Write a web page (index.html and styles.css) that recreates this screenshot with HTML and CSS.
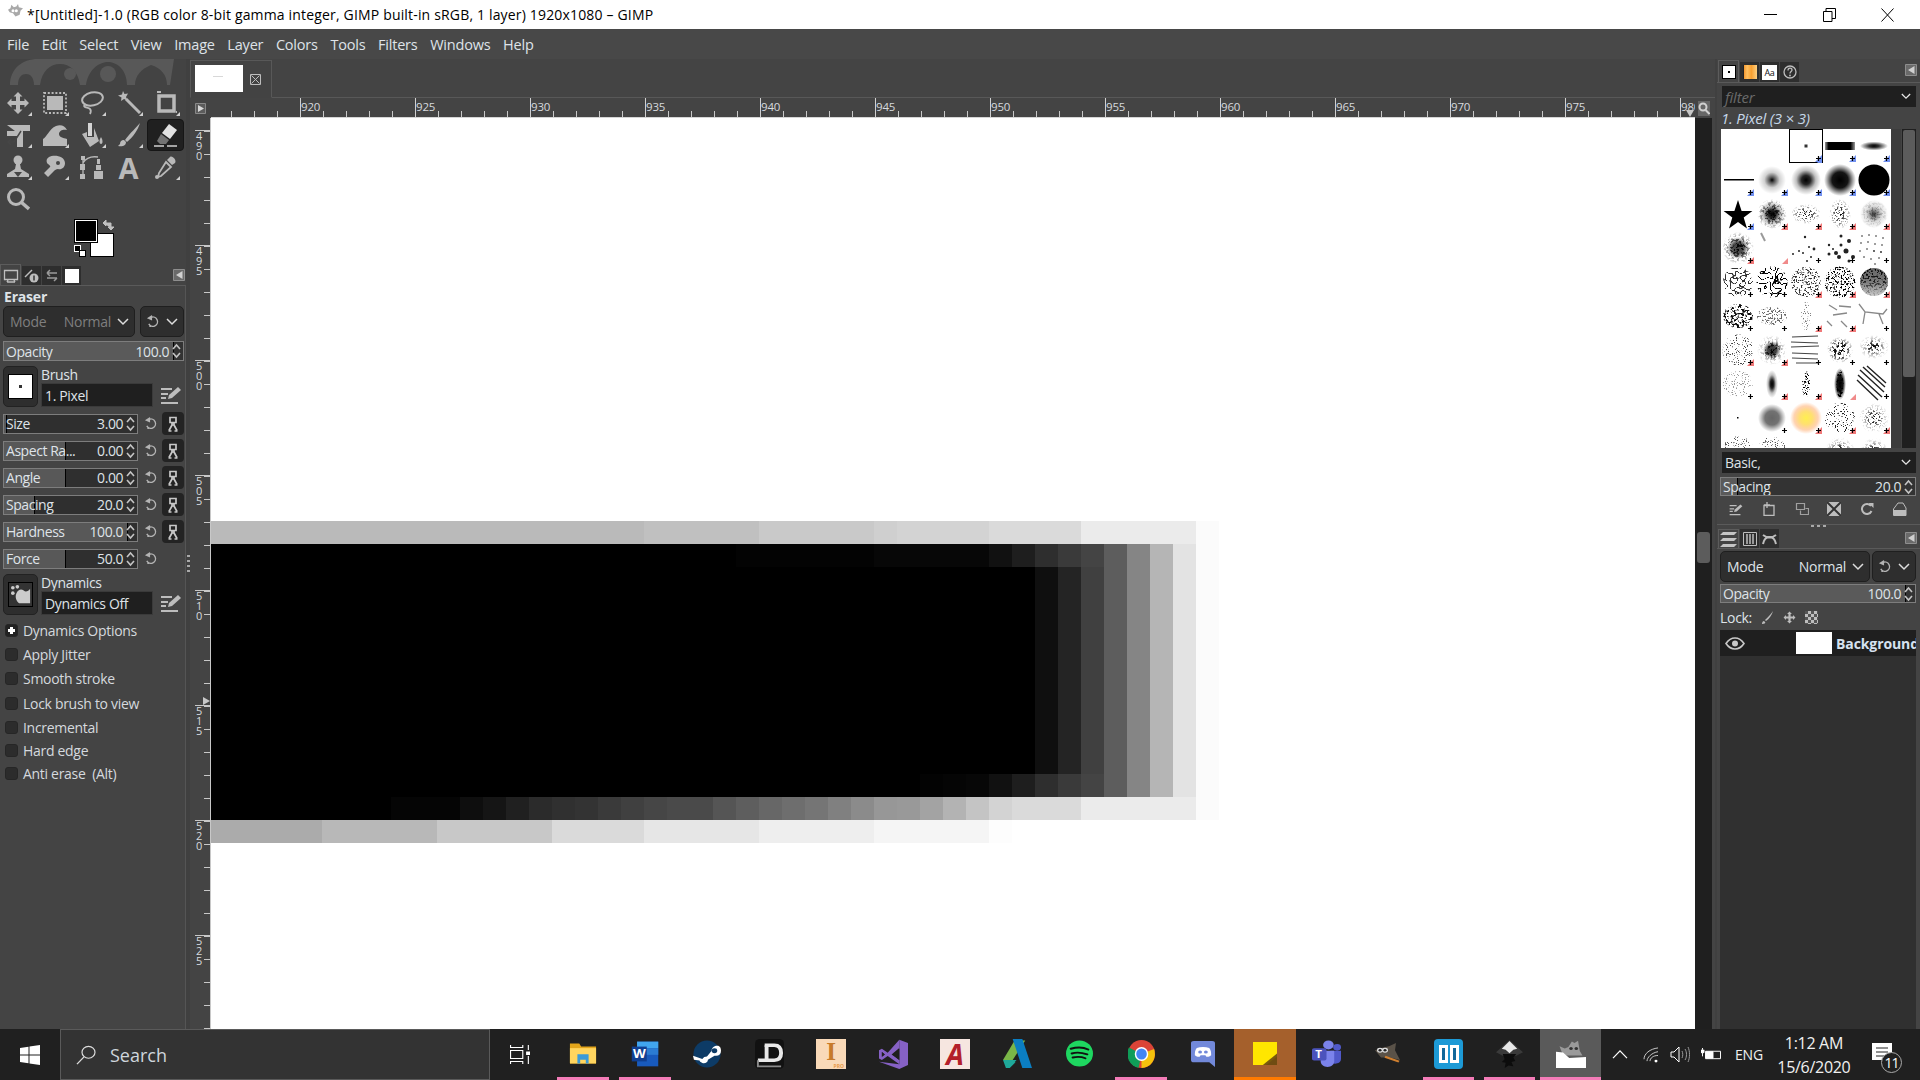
FILE: index.html
```html
<!DOCTYPE html>
<html lang="en">
<head>
<meta charset="utf-8">
<title>GIMP</title>
<link rel="stylesheet" href="styles.css">
</head>
<body>
<svg class="defs" width="0" height="0" aria-hidden="true">
  <defs>
    <symbol id="chev" viewBox="0 0 12 8"><path d="M1 1l5 5 5-5" fill="none" stroke="currentColor" stroke-width="1.5"/></symbol>
    <symbol id="spin" viewBox="0 0 9 18"><path d="M1 7l3.500-4 3.500 4M1 11l3.500 4 3.500-4" fill="none" stroke="currentColor" stroke-width="1.600"/></symbol>
    <symbol id="reset" viewBox="0 0 14 14"><path d="M5.500 2.500A5 5 0 1 1 3 9.500" fill="none" stroke="currentColor" stroke-width="1.500"/><path d="M1 3.500L6.500 0v6z" fill="currentColor"/><circle cx="4.500" cy="12" r="1" fill="currentColor"/></symbol>
    <symbol id="link" viewBox="0 0 12 16"><path d="M3 1.500h6v5H3zM5 7h2v2H5zM2 14.500L5 9M10 14.500L7 9M1.500 15h3M7.500 15h3" fill="none" stroke="currentColor" stroke-width="1.700"/></symbol>
    <symbol id="edit" viewBox="0 0 22 20"><path d="M1 4h11M1 9h7M1 13h5M1 18h17" stroke="currentColor" stroke-width="2" fill="none"/><path d="M8 14l1-4L18 2l3 3-9 8z" fill="currentColor"/></symbol>
    <symbol id="menu" viewBox="0 0 12 12"><path d="M.5.500h11v11H.5z" fill="#6a6a6a" stroke="#8e8e8e"/><path d="M9.500 2v8L3 6z" fill="#d0d0d0"/></symbol>
    <symbol id="wilber" viewBox="0 0 20 18"><path d="M1 7l3-2 1-4 3 3 3-1 2-3 1 4 5 1-3 3-1 5-5 2-3-4-4-1z" fill="currentColor"/><circle cx="7" cy="8" r="1.800" fill="#fff"/><circle cx="11" cy="8" r="1.800" fill="#fff"/></symbol>
    <symbol id="t-move" viewBox="0 0 24 24"><path d="M12 1l4.500 4.500H14V10h4.500V7.500L23 12l-4.500 4.500V14H14v4.500h2.500L12 23l-4.500-4.500H10V14H5.500v2.500L1 12l4.500-4.500V10H10V5.500H7.500z" fill="currentColor"/></symbol>
    <symbol id="t-rect" viewBox="0 0 24 24"><rect x="1" y="2" width="22" height="20" fill="none" stroke="currentColor" stroke-width="1.800" stroke-dasharray="2 1.800"/><rect x="4" y="5" width="16" height="14" fill="currentColor"/></symbol>
    <symbol id="t-lasso" viewBox="0 0 24 24"><ellipse cx="12.500" cy="8" rx="10.500" ry="6.500" fill="none" stroke="currentColor" stroke-width="2" transform="rotate(-12 12 8)"/><path d="M5 13c-3 4 3 3 5 5 1 1 1 3 0 5" fill="none" stroke="currentColor" stroke-width="1.800"/></symbol>
    <symbol id="t-wand" viewBox="0 0 24 24"><path d="M9 8l14 14" stroke="currentColor" stroke-width="3"/><path d="M6 0l1.500 3 3.500-.5L9 6l1.500 3.500L7 8l-3 2 .5-3.500L1 4.500 5 3.500z" fill="currentColor"/></symbol>
    <symbol id="t-crop" viewBox="0 0 24 24"><path d="M5 5h15v15H5z" fill="none" stroke="currentColor" stroke-width="3.500"/><path d="M3 1h4M22 21h1" stroke="currentColor" stroke-width="2"/></symbol>
    <symbol id="t-uni" viewBox="0 0 24 24"><path d="M1 1h23v6H17v17h-6V12H1V7h8z" fill="currentColor" transform="translate(0 1)"/><path d="M15 8L8 19H2M5 16l-3 3 3 3" fill="none" stroke="#464646" stroke-width="1.500"/></symbol>
    <symbol id="t-warp" viewBox="0 0 24 24"><path d="M0 23v-7C4 14 6 6 13 3c5-2 9 0 11 4-3-1-8 0-8 4 0 3 4 4 8 5v7z" fill="currentColor"/></symbol>
    <symbol id="t-fill" viewBox="0 0 24 24"><path d="M2 11l5-2v5h7V5l5 13-9 6z" fill="currentColor"/><path d="M8 0h4v13H8z" fill="#d4d4d4"/><path d="M21 14c2 3 2 7 0 7s-2-4 0-7z" fill="currentColor"/></symbol>
    <symbol id="t-brush" viewBox="0 0 24 24"><path d="M23 0C20 4 13 10 8 17l2 2C16 14 21 7 23 0z" fill="currentColor"/><path d="M7 17c-3 0-4 2-4 4l-2 2c4 1 8 0 8-4z" fill="currentColor"/></symbol>
    <symbol id="t-erase" viewBox="0 0 24 24"><path d="M15 1l8 6-7 9-8-6z" fill="#e2e2e2"/><path d="M7 11l8 6-3 4H6l-3-3z" fill="#737373"/><path d="M0 23h10M13 23h10" stroke="#cfcfcf" stroke-width="1.500"/></symbol>
    <symbol id="t-clone" viewBox="0 0 24 24"><circle cx="12" cy="5" r="4.500" fill="currentColor"/><path d="M10 9h4l1 5 8 5v3H1v-3l8-5z" fill="currentColor"/><path d="M8 17h8l-4 5z" fill="#464646"/></symbol>
    <symbol id="t-smudge" viewBox="0 0 24 24"><path d="M6 2c5-3 16-1 16 6 0 5-4 7-7 6-2 0-3 1-4 2l-6 6-4-4 6-6c1-1-1-2-2-3C3 7 3 4 6 2z" fill="currentColor"/><circle cx="15" cy="8" r="2" fill="#464646"/></symbol>
    <symbol id="t-path" viewBox="0 0 24 24"><path d="M0 9h5v6H0zM0 19h5v5H0zM1 1h4v4H1zM14 16h9v8h-9zM16 10h5v5h-5zM17 4h3v5h-3z" fill="currentColor"/><path d="M3 5v14M3 8c3-5 8-7 15-6" fill="none" stroke="currentColor" stroke-width="1.300"/></symbol>
    <symbol id="t-pick" viewBox="0 0 24 24"><path d="M16 2c2-2 7 3 5 6l-3 2-5-5z" fill="currentColor"/><path d="M12 7l5 5-10 9-3 1 1-4z" fill="none" stroke="currentColor" stroke-width="1.800"/><circle cx="3" cy="22" r="2" fill="currentColor"/></symbol>
    <symbol id="t-zoom" viewBox="0 0 24 24"><circle cx="10" cy="10" r="7.500" fill="none" stroke="currentColor" stroke-width="3"/><path d="M15 15l8 7" stroke="currentColor" stroke-width="3.500"/></symbol>
    <symbol id="pb" viewBox="0 0 7 7"><path d="M7 0v7H0z" fill="#7090f0"/><path d="M3.500 1v5M1 3.500h5" stroke="#000" stroke-width="1.200"/></symbol>
    <symbol id="pr" viewBox="0 0 7 7"><path d="M7 0v7H0z" fill="#f07878"/><path d="M3.500 1v5M1 3.500h5" stroke="#000" stroke-width="1.200"/></symbol>
    <symbol id="pk" viewBox="0 0 7 7"><path d="M3.500 1v5M1 3.500h5" stroke="#000" stroke-width="1.200"/></symbol>
    <radialGradient id="g-soft"><stop offset="0" stop-color="#000"/><stop offset=".35" stop-color="#000" stop-opacity=".8"/><stop offset="1" stop-color="#000" stop-opacity="0"/></radialGradient>
    <radialGradient id="g-s1"><stop offset="0" stop-color="#000"/><stop offset=".2" stop-color="#000" stop-opacity=".65"/><stop offset=".55" stop-color="#000" stop-opacity=".18"/><stop offset="1" stop-color="#000" stop-opacity="0"/></radialGradient>
    <radialGradient id="g-s2"><stop offset="0" stop-color="#000"/><stop offset=".3" stop-color="#000" stop-opacity=".85"/><stop offset=".65" stop-color="#000" stop-opacity=".25"/><stop offset="1" stop-color="#000" stop-opacity="0"/></radialGradient>
    <radialGradient id="g-s3"><stop offset="0" stop-color="#000"/><stop offset=".5" stop-color="#000" stop-opacity=".92"/><stop offset=".8" stop-color="#000" stop-opacity=".35"/><stop offset="1" stop-color="#000" stop-opacity="0"/></radialGradient>
    <radialGradient id="g-glow"><stop offset="0" stop-color="#ffef50"/><stop offset=".4" stop-color="#ffe070"/><stop offset=".75" stop-color="#ffc090" stop-opacity=".7"/><stop offset="1" stop-color="#ffc090" stop-opacity="0"/></radialGradient>
    <linearGradient id="g-bar"><stop offset="0" stop-color="#000" stop-opacity=".4"/><stop offset=".12" stop-color="#000"/><stop offset=".85" stop-color="#000"/><stop offset="1" stop-color="#000" stop-opacity=".4"/></linearGradient>
    <linearGradient id="g-fade" x1="0" y1="0" x2="0" y2="1"><stop offset="0" stop-color="#000"/><stop offset=".5" stop-color="#222"/><stop offset="1" stop-color="#aaa"/></linearGradient>
    <linearGradient id="g-pal"><stop offset="0" stop-color="#f08a20"/><stop offset=".3" stop-color="#ffc060"/><stop offset=".6" stop-color="#f9a030"/><stop offset="1" stop-color="#ffd080"/></linearGradient>
    <filter id="sp-a" x="0" y="0" width="1" height="1"><feTurbulence type="fractalNoise" baseFrequency=".38" numOctaves="2" seed="4"/><feColorMatrix type="matrix" values="0 0 0 0 0 0 0 0 0 0 0 0 0 0 0 0 0 0 10 -5"/><feComposite in="SourceGraphic" operator="in"/></filter>
    <filter id="sp-b" x="0" y="0" width="1" height="1"><feTurbulence type="fractalNoise" baseFrequency=".55" numOctaves="2" seed="11"/><feColorMatrix type="matrix" values="0 0 0 0 0 0 0 0 0 0 0 0 0 0 0 0 0 0 10 -5.300"/><feComposite in="SourceGraphic" operator="in"/></filter>
    <filter id="sp-c" x="0" y="0" width="1" height="1"><feTurbulence type="fractalNoise" baseFrequency=".9" numOctaves="1" seed="23"/><feColorMatrix type="matrix" values="0 0 0 0 0 0 0 0 0 0 0 0 0 0 0 0 0 0 14 -8.400"/><feComposite in="SourceGraphic" operator="in"/></filter>
    <filter id="net" x="0" y="0" width="1" height="1"><feTurbulence type="turbulence" baseFrequency=".2" numOctaves="1" seed="8"/><feColorMatrix type="matrix" values="0 0 0 0 0 0 0 0 0 0 0 0 0 0 0 0 0 0 -26 2.400"/><feComposite in="SourceGraphic" operator="in"/></filter>
  </defs>
</svg>

<header class="titlebar">
  <svg class="title-icon"><use href="#wilber"/></svg>
  <span class="title-text">*[Untitled]-1.0 (RGB color 8-bit gamma integer, GIMP built-in sRGB, 1 layer) 1920x1080 – GIMP</span>
  <div class="winbtns">
    <span class="winbtn"><svg width="13" height="13" viewBox="0 0 13 13"><path d="M0 6.500h13" stroke="#000"/></svg></span>
    <span class="winbtn"><svg width="13" height="14" viewBox="0 0 13 14"><path d="M.5 3.500h8.500v10H.5zM3 3V.5h9.500v10H9" fill="none" stroke="#000"/></svg></span>
    <span class="winbtn"><svg width="13" height="14" viewBox="0 0 13 14"><path d="M.5.500l12 13M12.500.500l-12 13" stroke="#000" fill="none"/></svg></span>
  </div>
</header>

<nav class="menubar">
  <span>File</span><span>Edit</span><span>Select</span><span>View</span><span>Image</span><span>Layer</span><span>Colors</span><span>Tools</span><span>Filters</span><span>Windows</span><span>Help</span>
</nav>

<main class="workspace">
  <aside class="leftdock">
    <div class="wilber-band">
      <svg width="180" height="26" viewBox="0 0 180 26"><path d="M10 26C10 10 22 0 38 0h136l-4 26h-3c0-10-6-17-16-20-10 4-16 11-16 20h-8C127 12 118 3 108 3S88 12 86 26h-6C78 12 70 5 60 5S42 12 40 26h-6c0-8-4-11-8-11s-8 3-8 11z" fill="#585858"/><circle cx="70" cy="15" r="6" fill="#585858"/><circle cx="108" cy="15" r="8" fill="#585858"/></svg>
    </div>
    <div class="toolgrid">
      <span class="tool"><svg><use href="#t-move"/></svg></span>
      <span class="tool"><svg><use href="#t-rect"/></svg></span>
      <span class="tool"><svg><use href="#t-lasso"/></svg></span>
      <span class="tool"><svg><use href="#t-wand"/></svg></span>
      <span class="tool"><svg><use href="#t-crop"/></svg></span>
      <span class="tool"><svg><use href="#t-uni"/></svg></span>
      <span class="tool"><svg><use href="#t-warp"/></svg></span>
      <span class="tool"><svg><use href="#t-fill"/></svg></span>
      <span class="tool"><svg><use href="#t-brush"/></svg></span>
      <span class="tool active"><svg><use href="#t-erase"/></svg></span>
      <span class="tool"><svg><use href="#t-clone"/></svg></span>
      <span class="tool"><svg><use href="#t-smudge"/></svg></span>
      <span class="tool plain"><svg><use href="#t-path"/></svg></span>
      <span class="tool plain"><b class="tool-a">A</b></span>
      <span class="tool"><svg><use href="#t-pick"/></svg></span>
      <span class="tool plain"><svg><use href="#t-zoom"/></svg></span>
    </div>
    <div class="colors">
      <div class="well">
        <span class="bgc"></span><span class="fgc"></span>
        <svg class="swap" viewBox="0 0 13 12"><path d="M1 4h8v5M1 4l3-3v6zM9 11l-3-3h6z" fill="#c0c0c0" stroke="#c0c0c0"/></svg>
        <span class="mini-b"></span><span class="mini-w"></span>
      </div>
    </div>
    <div class="tabrow">
      <span class="tab first"><svg width="16" height="16" viewBox="0 0 16 16"><path d="M1.500 3.500h13v9h-13zM4 15h8M5 13l-1 2M11 13l1 2" fill="none" stroke="#bdbdbd" stroke-width="1.300"/></svg></span>
      <span class="tab"><svg width="15" height="15" viewBox="0 0 15 15"><path d="M1 9L8 2" stroke="#bdbdbd" stroke-width="1.500"/><circle cx="10" cy="10" r="4.500" fill="#bdbdbd"/><path d="M10 7.500v5" stroke="#333" stroke-width="1.500"/></svg></span>
      <span class="tab"><svg width="15" height="15" viewBox="0 0 15 15"><path d="M3 5h10M3 5l3-3M3 5l3 3M13 10H3M13 10l-3 3" fill="none" stroke="#9a9a9a" stroke-width="1.500"/></svg></span>
      <span class="tab"><span class="tab-thumb"></span></span>
      <svg class="dockmenu"><use href="#menu"/></svg>
    </div>
    <section class="options">
      <h2 class="opt-title">Eraser</h2>
      <div class="comborow">
        <div class="combo grow dim"><span class="muted">Mode</span><span class="muted push">Normal</span><svg class="c12"><use href="#chev"/></svg></div>
        <div class="combo small"><svg class="r14"><use href="#reset"/></svg><svg class="c12"><use href="#chev"/></svg></div>
      </div>
      <div class="slider full" style="--v:169px"><span>Opacity</span><span class="val">100.0</span><svg class="spinner"><use href="#spin"/></svg></div>
      <div class="picker">
        <span class="pick-btn"><span class="pick-prev"><i></i></span></span>
        <div class="pick-body">
          <span class="pick-label">Brush</span>
          <span class="pick-entry">1. Pixel</span>
        </div>
        <svg class="edit"><use href="#edit"/></svg>
      </div>
      <div class="params">
        <div class="param"><div class="slider" style="--v:2px"><span>Size</span><span class="val">3.00</span><svg class="spinner"><use href="#spin"/></svg></div><svg class="r14"><use href="#reset"/></svg><span class="lock"><svg><use href="#link"/></svg></span></div>
        <div class="param"><div class="slider" style="--v:61px"><span>Aspect Ra...</span><span class="val">0.00</span><svg class="spinner"><use href="#spin"/></svg></div><svg class="r14"><use href="#reset"/></svg><span class="lock"><svg><use href="#link"/></svg></span></div>
        <div class="param"><div class="slider" style="--v:61px"><span>Angle</span><span class="val">0.00</span><svg class="spinner"><use href="#spin"/></svg></div><svg class="r14"><use href="#reset"/></svg><span class="lock"><svg><use href="#link"/></svg></span></div>
        <div class="param"><div class="slider" style="--v:30px"><span>Spacing</span><span class="val">20.0</span><svg class="spinner"><use href="#spin"/></svg></div><svg class="r14"><use href="#reset"/></svg><span class="lock"><svg><use href="#link"/></svg></span></div>
        <div class="param"><div class="slider" style="--v:123px"><span>Hardness</span><span class="val">100.0</span><svg class="spinner"><use href="#spin"/></svg></div><svg class="r14"><use href="#reset"/></svg><span class="lock"><svg><use href="#link"/></svg></span></div>
        <div class="param"><div class="slider" style="--v:61px"><span>Force</span><span class="val">50.0</span><svg class="spinner"><use href="#spin"/></svg></div><svg class="r14"><use href="#reset"/></svg></div>
      </div>
      <div class="picker dyn">
        <span class="pick-btn"><span class="pick-prev dark"><svg width="22" height="20" viewBox="0 0 24 22"><circle cx="3" cy="3" r="2" fill="#ccc"/><circle cx="8" cy="2" r="2" fill="#ccc"/><circle cx="3" cy="9" r="2" fill="#ccc"/><path d="M7 9c2-4 5-5 8-3 2 2 5 1 7-2v16H10c-3-2-5-7-3-11z" fill="#ccc"/></svg></span></span>
        <div class="pick-body">
          <span class="pick-label">Dynamics</span>
          <span class="pick-entry">Dynamics Off</span>
        </div>
        <svg class="edit"><use href="#edit"/></svg>
      </div>
      <ul class="checks">
        <li class="check"><span class="box on"></span>Dynamics Options</li>
        <li class="check"><span class="box"></span>Apply Jitter</li>
        <li class="check tall"><span class="box"></span>Smooth stroke</li>
        <li class="check tall"><span class="box"></span>Lock brush to view</li>
        <li class="check short"><span class="box"></span>Incremental</li>
        <li class="check short"><span class="box"></span>Hard edge</li>
        <li class="check short"><span class="box"></span>Anti erase  (Alt)</li>
      </ul>
    </section>
  </aside>

  <div class="sash"><i></i></div>

  <section class="center">
    <div class="imagetabs">
      <div class="imgtab">
        <span class="imgthumb"></span>
        <svg width="11" height="11" viewBox="0 0 11 11"><path d="M.5.500h10v10H.5zM1.500 1.500l8 8M9.500 1.500l-8 8" fill="none" stroke="#bdbdbd"/></svg>
      </div>
    </div>
    <div class="view">
      <span class="corner"><svg width="11" height="11" viewBox="0 0 11 11"><path d="M.5.500h10v10H.5z" fill="#5c5c5c" stroke="#8a8a8a"/><path d="M3 2l6 3.500L3 9z" fill="#d8d8d8"/></svg></span>
      <div class="hruler">
        <span>920</span><span>925</span><span>930</span><span>935</span><span>940</span><span>945</span><span>950</span><span>955</span><span>960</span><span>965</span><span>970</span><span>975</span><span>980</span>
      </div>
      <span class="zoombtn"><svg width="12" height="13" viewBox="0 0 12 13"><circle cx="5" cy="5" r="3.500" fill="none" stroke="#d0d0d0" stroke-width="2"/><path d="M7.500 8l4 4" stroke="#d0d0d0" stroke-width="2"/></svg></span>
      <div class="vruler">
        <span>490</span><span>495</span><span>500</span><span>505</span><span>510</span><span>515</span><span>520</span><span>525</span>
      </div>
      <svg class="paint" viewBox="211 117 1484 911" preserveAspectRatio="none" shape-rendering="crispEdges" role="img" aria-label="Canvas">
        <rect x="211" y="117" width="1484" height="911" fill="#fff"/>
        <g>
          <rect x="207" y="520" width="437" height="23" fill="#bababa"/>
          <rect x="644" y="520" width="115" height="23" fill="#c0c0c0"/>
          <rect x="759" y="520" width="115" height="23" fill="#c9c9c9"/>
          <rect x="874" y="520" width="23" height="23" fill="#cfcfcf"/>
          <rect x="897" y="520" width="92" height="23" fill="#d3d3d3"/>
          <rect x="989" y="520" width="92" height="23" fill="#dadada"/>
          <rect x="1081" y="520" width="115" height="23" fill="#ebebeb"/>
          <rect x="1196" y="520" width="23" height="299" fill="#fbfbfb"/>
          <rect x="207" y="543" width="828" height="253" fill="#000"/>
          <rect x="736" y="543" width="138" height="23" fill="#030303"/>
          <rect x="874" y="543" width="115" height="23" fill="#070707"/>
          <rect x="989" y="543" width="23" height="23" fill="#111"/>
          <rect x="1012" y="543" width="23" height="23" fill="#1e1e1e"/>
          <rect x="1035" y="543" width="23" height="23" fill="#2e2e2e"/>
          <rect x="1058" y="543" width="23" height="23" fill="#3a3a3a"/>
          <rect x="1081" y="543" width="23" height="23" fill="#444"/>
          <rect x="1035" y="566" width="23" height="207" fill="#0f0f0f"/>
          <rect x="1058" y="566" width="23" height="207" fill="#242424"/>
          <rect x="1081" y="566" width="23" height="207" fill="#404040"/>
          <rect x="1104" y="543" width="23" height="253" fill="#5d5d5d"/>
          <rect x="1127" y="543" width="23" height="253" fill="#858585"/>
          <rect x="1150" y="543" width="23" height="253" fill="#b5b5b5"/>
          <rect x="1173" y="543" width="23" height="253" fill="#e3e3e3"/>
          <rect x="920" y="773" width="23" height="23" fill="#030303"/>
          <rect x="943" y="773" width="23" height="23" fill="#050505"/>
          <rect x="966" y="773" width="23" height="23" fill="#070707"/>
          <rect x="989" y="773" width="23" height="23" fill="#111"/>
          <rect x="1012" y="773" width="23" height="23" fill="#1e1e1e"/>
          <rect x="1035" y="773" width="23" height="23" fill="#2e2e2e"/>
          <rect x="1058" y="773" width="23" height="23" fill="#3a3a3a"/>
          <rect x="1081" y="773" width="23" height="23" fill="#444"/>
          <rect x="207" y="796" width="184" height="23" fill="#000"/>
          <rect x="391" y="796" width="69" height="23" fill="#050505"/>
          <rect x="460" y="796" width="23" height="23" fill="#0e0e0e"/>
          <rect x="483" y="796" width="23" height="23" fill="#151515"/>
          <rect x="506" y="796" width="23" height="23" fill="#202020"/>
          <rect x="529" y="796" width="23" height="23" fill="#2b2b2b"/>
          <rect x="552" y="796" width="23" height="23" fill="#303030"/>
          <rect x="575" y="796" width="23" height="23" fill="#333"/>
          <rect x="598" y="796" width="23" height="23" fill="#3a3a3a"/>
          <rect x="621" y="796" width="23" height="23" fill="#404040"/>
          <rect x="644" y="796" width="23" height="23" fill="#464646"/>
          <rect x="667" y="796" width="46" height="23" fill="#4a4a4a"/>
          <rect x="713" y="796" width="23" height="23" fill="#555"/>
          <rect x="736" y="796" width="23" height="23" fill="#5e5e5e"/>
          <rect x="759" y="796" width="23" height="23" fill="#676767"/>
          <rect x="782" y="796" width="23" height="23" fill="#6e6e6e"/>
          <rect x="805" y="796" width="23" height="23" fill="#757575"/>
          <rect x="828" y="796" width="23" height="23" fill="#808080"/>
          <rect x="851" y="796" width="23" height="23" fill="#8b8b8b"/>
          <rect x="874" y="796" width="23" height="23" fill="#979797"/>
          <rect x="897" y="796" width="23" height="23" fill="#999"/>
          <rect x="920" y="796" width="23" height="23" fill="#a3a3a3"/>
          <rect x="943" y="796" width="23" height="23" fill="#b3b3b3"/>
          <rect x="966" y="796" width="23" height="23" fill="#c4c4c4"/>
          <rect x="989" y="796" width="23" height="23" fill="#d3d3d3"/>
          <rect x="1012" y="796" width="69" height="23" fill="#dadada"/>
          <rect x="1081" y="796" width="115" height="23" fill="#ebebeb"/>
          <rect x="207" y="819" width="115" height="23" fill="#ababab"/>
          <rect x="322" y="819" width="115" height="23" fill="#b8b8b8"/>
          <rect x="437" y="819" width="115" height="23" fill="#c8c8c8"/>
          <rect x="552" y="819" width="92" height="23" fill="#dadada"/>
          <rect x="644" y="819" width="115" height="23" fill="#e6e6e6"/>
          <rect x="759" y="819" width="115" height="23" fill="#eee"/>
          <rect x="874" y="819" width="115" height="23" fill="#f5f5f5"/>
          <rect x="989" y="819" width="23" height="23" fill="#fdfdfd"/>
        </g>
      </svg>
      <div class="vscroll"><i></i></div>
    </div>
  </section>

  <div class="sash right"><i></i></div>

  <aside class="rightdock">
    <div class="tabrow rt">
      <span class="tab first"><span class="tab-swatch"><i></i></span></span>
      <span class="tab"><svg width="14" height="14" viewBox="0 0 14 14"><rect width="14" height="14" fill="url(#g-pal)"/><path d="M.5 0v14" stroke="#222"/></svg></span>
      <span class="tab"><span class="tab-aa">Aa</span></span>
      <span class="tab"><svg width="14" height="14" viewBox="0 0 14 14"><circle cx="7" cy="7" r="6" fill="none" stroke="#bdbdbd" stroke-width="1.300"/><path d="M5 5.500c0-3 4-3 4-.5 0 1.500-2 1.500-2 3.500" fill="none" stroke="#bdbdbd" stroke-width="1.300"/><circle cx="7" cy="10.500" r=".9" fill="#bdbdbd"/></svg></span>
      <svg class="dockmenu"><use href="#menu"/></svg>
    </div>
    <div class="brushes-panel">
      <div class="darkcombo"><em class="filter">filter</em><svg class="c10"><use href="#chev"/></svg></div>
      <div class="brushname">1. Pixel (3 × 3)</div>
      <div class="brushview">
        <svg class="brushgrid" width="170" height="319" viewBox="0 0 170 319" role="img" aria-label="Brushes">
          <rect width="170" height="319" fill="#fff"/>
          <!-- row 1 -->
          <rect x="68.500" y=".5" width="33" height="33" fill="#fff" stroke="#000"/>
          <rect x="83.500" y="15.500" width="3" height="3" fill="#333"/>
          <path d="M101 34V29l-5 5z" fill="#7090f0"/>
          <rect x="104" y="13" width="30" height="8" fill="url(#g-bar)"/>
          <ellipse cx="153" cy="17" rx="14" ry="4.500" fill="url(#g-soft)"/>
          <!-- row 2 -->
          <rect x="3" y="50" width="30" height="1.500" fill="#000"/>
          <circle cx="51" cy="51" r="14" fill="url(#g-s1)"/>
          <circle cx="85" cy="51" r="15" fill="url(#g-s2)"/>
          <circle cx="119" cy="51" r="16" fill="url(#g-s3)"/>
          <circle cx="153" cy="51" r="15.500" fill="#000"/>
          <!-- row 3 -->
          <path d="M17 71l3.600 11h10.800l-8.700 6.500 3.300 11L17 93l-9 6.500 3.300-11L2.600 82h10.800z" fill="#000"/>
          <circle cx="51" cy="85" r="13" fill="url(#g-s2)"/>
          <circle cx="51" cy="85" r="15" fill="url(#g-soft)" filter="url(#sp-a)"/>
          <ellipse cx="85" cy="85" rx="15" ry="10" fill="url(#g-soft)" filter="url(#sp-b)"/>
          <ellipse cx="119" cy="85" rx="11" ry="15" fill="url(#g-soft)" filter="url(#sp-b)"/>
          <circle cx="153" cy="85" r="14" fill="url(#g-s1)" opacity=".8"/>
          <circle cx="153" cy="85" r="14" fill="url(#g-soft)" opacity=".35" filter="url(#sp-a)"/>
          <!-- row 4 -->
          <circle cx="17" cy="119" r="11" fill="url(#g-s3)" opacity=".75"/>
          <circle cx="17" cy="119" r="16" fill="url(#g-soft)" filter="url(#sp-a)"/>
          <path d="M40 104l4 8" stroke="#999" stroke-width="2"/>
          <g fill="#222"><circle cx="72" cy="125" r="1"/><circle cx="78" cy="122" r="1"/><circle cx="84" cy="108" r="1.200"/><circle cx="88" cy="118" r="1"/><circle cx="93" cy="120" r="1.400"/><circle cx="82" cy="124" r="1"/><circle cx="90" cy="128" r="1"/><circle cx="86" cy="132" r="1"/><circle cx="108" cy="116" r="1.200"/><circle cx="115" cy="124" r="2"/><circle cx="120" cy="116" r="1.500"/><circle cx="128" cy="112" r="2"/><circle cx="125" cy="122" r="2.500"/><circle cx="118" cy="128" r="2"/><circle cx="108" cy="125" r="1.500"/><circle cx="132" cy="128" r="2"/><circle cx="120" cy="107" r="1.500"/><circle cx="128" cy="132" r="1.500"/><circle cx="112" cy="120" r="1"/></g>
          <g fill="#222"><circle cx="141" cy="107" r=".8"/><circle cx="148" cy="106" r=".8"/><circle cx="155" cy="107" r=".8"/><circle cx="162" cy="109" r=".8"/><circle cx="140" cy="114" r=".8"/><circle cx="147" cy="113" r=".8"/><circle cx="154" cy="115" r=".8"/><circle cx="161" cy="116" r=".8"/><circle cx="139" cy="122" r=".8"/><circle cx="146" cy="120" r=".8"/><circle cx="153" cy="122" r=".9"/><circle cx="160" cy="123" r=".9"/><circle cx="143" cy="128" r=".8"/><circle cx="150" cy="130" r=".8"/><circle cx="158" cy="129" r=".8"/><circle cx="154" cy="135" r=".8"/></g>
          <!-- row 5 -->
          <circle cx="17" cy="153" r="15" fill="#333" filter="url(#net)"/>
          <circle cx="51" cy="153" r="15.500" fill="#000" filter="url(#net)"/>
          <circle cx="85" cy="153" r="15" fill="#333" filter="url(#sp-b)"/>
          <circle cx="119" cy="153" r="15.500" fill="#000" filter="url(#sp-b)"/>
          <circle cx="153" cy="153" r="14" fill="url(#g-fade)" opacity=".6"/>
          <circle cx="153" cy="153" r="14" fill="url(#g-fade)" filter="url(#sp-b)"/>
          <!-- row 6 -->
          <ellipse cx="17" cy="187" rx="15" ry="12" fill="#111" filter="url(#sp-a)"/>
          <ellipse cx="51" cy="187" rx="15" ry="9" fill="#666" filter="url(#sp-b)"/>
          <ellipse cx="85" cy="187" rx="5" ry="14" fill="#777" filter="url(#sp-c)"/>
          <g stroke="#888" stroke-width="1.300" fill="none"><path d="M108 176l8 5M118 177l12 1M112 186l14-2M106 192l5 5M120 192l6 6"/><path d="M138 175l6 8 18 2 4-5M144 183l-2 12M158 185l4 10"/></g>
          <!-- row 7 -->
          <circle cx="17" cy="221" r="15.500" fill="#444" filter="url(#sp-c)"/>
          <circle cx="51" cy="221" r="9" fill="url(#g-s3)" opacity=".8"/>
          <circle cx="51" cy="221" r="15" fill="url(#g-s2)" filter="url(#sp-a)"/>
          <g stroke="#444" stroke-width="1.200"><path d="M71 208l26-1M70 213l27 1M70 218l28-1M71 224l26 1M71 229l26 1M75 234l22 0"/></g>
          <circle cx="119" cy="221" r="13" fill="url(#g-s3)" filter="url(#sp-a)"/>
          <ellipse cx="153" cy="218" rx="15" ry="12" fill="url(#g-s2)" filter="url(#sp-a)"/>
          <!-- row 8 -->
          <ellipse cx="17" cy="255" rx="15" ry="13" fill="#999" filter="url(#sp-c)"/>
          <ellipse cx="51" cy="255" rx="6" ry="14" fill="url(#g-s2)"/>
          <ellipse cx="85" cy="255" rx="4" ry="13" fill="#000" filter="url(#sp-b)"/>
          <ellipse cx="119" cy="255" rx="6" ry="16" fill="url(#g-s3)"/>
          <ellipse cx="119" cy="255" rx="3.500" ry="14" fill="#000" filter="url(#sp-a)"/>
          <g stroke="#222" stroke-width="1.400"><path d="M139 241l24 22M137 246l24 22M136 251l21 20M142 238l22 20M146 237l19 17"/></g>
          <!-- row 9 -->
          <rect x="16" y="288" width="1.500" height="1.500" fill="#000"/>
          <circle cx="51" cy="289" r="14" fill="url(#g-s3)" opacity=".6"/>
          <circle cx="85" cy="289" r="16" fill="url(#g-glow)"/>
          <circle cx="119" cy="289" r="15" fill="#222" filter="url(#sp-c)"/>
          <circle cx="153" cy="289" r="15" fill="url(#g-s2)" filter="url(#sp-b)"/>
          <!-- row 10 -->
          <circle cx="17" cy="323" r="16" fill="#555" filter="url(#sp-c)"/>
          <circle cx="51" cy="323" r="15" fill="#555" filter="url(#sp-c)"/>
          <circle cx="119" cy="323" r="15" fill="url(#g-s2)" filter="url(#sp-a)"/>
          <circle cx="153" cy="323" r="14" fill="url(#g-s2)" filter="url(#sp-a)"/>
          <g>
            <use href="#pb" x="94" y="26" width="7" height="7"/><use href="#pb" x="128" y="26" width="7" height="7"/><use href="#pb" x="162" y="26" width="7" height="7"/>
            <use href="#pb" x="26" y="60" width="7" height="7"/><use href="#pb" x="60" y="60" width="7" height="7"/><use href="#pb" x="94" y="60" width="7" height="7"/><use href="#pb" x="128" y="60" width="7" height="7"/><use href="#pb" x="162" y="60" width="7" height="7"/>
            <use href="#pb" x="26" y="94" width="7" height="7"/><use href="#pr" x="60" y="94" width="7" height="7"/><use href="#pr" x="94" y="94" width="7" height="7"/><use href="#pr" x="128" y="94" width="7" height="7"/><use href="#pr" x="162" y="94" width="7" height="7"/>
            <use href="#pr" x="26" y="128" width="7" height="7"/><path d="M67 129v6h-6z" fill="#f08a8a"/><use href="#pk" x="94" y="128" width="7" height="7"/><use href="#pk" x="128" y="128" width="7" height="7"/><use href="#pk" x="162" y="128" width="7" height="7"/>
            <use href="#pk" x="26" y="162" width="7" height="7"/><use href="#pk" x="60" y="162" width="7" height="7"/><use href="#pr" x="94" y="162" width="7" height="7"/><use href="#pr" x="128" y="162" width="7" height="7"/><use href="#pr" x="162" y="162" width="7" height="7"/>
            <use href="#pk" x="26" y="196" width="7" height="7"/><use href="#pk" x="60" y="196" width="7" height="7"/><use href="#pr" x="94" y="196" width="7" height="7"/><use href="#pr" x="128" y="196" width="7" height="7"/><use href="#pk" x="162" y="196" width="7" height="7"/>
            <use href="#pr" x="26" y="230" width="7" height="7"/><use href="#pr" x="60" y="230" width="7" height="7"/><use href="#pk" x="94" y="230" width="7" height="7"/><use href="#pk" x="128" y="230" width="7" height="7"/><use href="#pk" x="162" y="230" width="7" height="7"/>
            <use href="#pk" x="26" y="264" width="7" height="7"/><use href="#pr" x="60" y="264" width="7" height="7"/><use href="#pr" x="94" y="264" width="7" height="7"/><path d="M135 265v6h-6z" fill="#f08a8a"/><use href="#pk" x="162" y="264" width="7" height="7"/>
            <use href="#pk" x="60" y="298" width="7" height="7"/><use href="#pr" x="94" y="298" width="7" height="7"/><use href="#pr" x="128" y="298" width="7" height="7"/><use href="#pr" x="162" y="298" width="7" height="7"/>
          </g>
        </svg>
        <div class="gutter"></div>
        <div class="bscroll"><i></i></div>
      </div>
      <div class="darkcombo basic"><span>Basic,</span><svg class="c10"><use href="#chev"/></svg></div>
      <div class="slider full sp" style="--v:16px"><span>Spacing</span><span class="val">20.0</span><svg class="spinner"><use href="#spin"/></svg></div>
      <div class="iconrow">
        <svg width="14" height="13"><use href="#edit"/></svg>
        <svg width="14" height="14" viewBox="0 0 14 14"><path d="M2 3.500h10v10H2zM5 0v6M2 3h6" fill="none" stroke="#bdbdbd" stroke-width="1.300"/></svg>
        <svg width="14" height="14" viewBox="0 0 14 14"><path d="M1.500 1.500h8v6h-8zM5.500 8.500v4h8v-6h-3" fill="none" stroke="#a0a0a0" stroke-width="1.200"/></svg>
        <svg width="14" height="14" viewBox="0 0 14 14"><rect width="14" height="14" fill="#bdbdbd"/><path d="M0 0l14 14M14 0L0 14" stroke="#333" stroke-width="2"/></svg>
        <svg width="14" height="14" viewBox="0 0 14 14"><path d="M11.500 9A5 5 0 1 1 11 4" fill="none" stroke="#bdbdbd" stroke-width="2"/><path d="M8.500 1h5v5z" fill="#bdbdbd"/></svg>
        <svg width="14" height="14" viewBox="0 0 14 14"><path d="M.5 13.500V7L5 1h5l3 5v7.500z" fill="none" stroke="#bdbdbd"/><path d="M1 8h12v5.500H1z" fill="#bdbdbd"/></svg>
      </div>
    </div>
    <div class="dock-split"><i></i></div>
    <div class="tabrow rt2">
      <span class="tab first"><svg width="17" height="15" viewBox="0 0 17 15"><path d="M3 0h14l-3 3H0zM3 6h14l-3 3H0zM3 12h14l-3 3H0z" fill="#c4c4c4"/></svg></span>
      <span class="tab"><svg width="14" height="14" viewBox="0 0 14 14"><path d="M.5.500h13v13H.5z" fill="none" stroke="#bdbdbd"/><path d="M4 2v10M7 2v10M10 2v10" stroke="#bdbdbd" stroke-width="1.500"/></svg></span>
      <span class="tab"><svg width="15" height="12" viewBox="0 0 15 12"><path d="M1 2c4 3 9 3 13 0M1 11c1-5 4-7 6.500-7s5.500 2 6.500 7" fill="none" stroke="#bdbdbd" stroke-width="2"/></svg></span>
      <svg class="dockmenu"><use href="#menu"/></svg>
    </div>
    <div class="layers-panel">
      <div class="comborow r">
        <div class="combo grow"><span>Mode</span><span class="push">Normal</span><svg class="c12"><use href="#chev"/></svg></div>
        <div class="combo small"><svg class="r14"><use href="#reset"/></svg><svg class="c12"><use href="#chev"/></svg></div>
      </div>
      <div class="slider full lay" style="--v:184px"><span>Opacity</span><span class="val">100.0</span><svg class="spinner"><use href="#spin"/></svg></div>
      <div class="lockrow">
        <span>Lock:</span>
        <svg width="13" height="13" viewBox="0 0 13 13"><path d="M12 0C10 3 6 7 4 9l1 1c3-2 6-6 7-10zM3 10c-1 0-2 1-2 3 2 0 4-1 3-2z" fill="#bdbdbd"/></svg>
        <svg width="13" height="13"><use href="#t-move"/></svg>
        <span class="lock-check"></span>
      </div>
      <div class="layerrow">
        <svg class="eye" width="20" height="13" viewBox="0 0 20 13"><path d="M1 6.500C4 2 7 1 10 1s6 1 9 5.500C16 11 13 12 10 12s-6-1-9-5.500z" fill="none" stroke="#c8c8c8" stroke-width="1.600"/><circle cx="10" cy="6.500" r="3" fill="#c8c8c8"/></svg>
        <span class="layerthumb"></span>
        <b class="layername">Background</b>
      </div>
      <div class="layerlist"></div>
    </div>
  </aside>
</main>

<footer class="taskbar">
  <span class="start"><svg width="20" height="20" viewBox="0 0 20 20"><path d="M0 3l8.500-1.200v7.700H0zM9.500 1.600L20 0v9.500H9.500zM0 10.500h8.500v7.700L0 17zM9.500 10.500H20V20L9.500 18.400z" fill="#fff"/></svg></span>
  <div class="search">
    <svg width="20" height="20" viewBox="0 0 20 22" preserveAspectRatio="none"><circle cx="12.500" cy="8" r="6.500" fill="none" stroke="#ddd" stroke-width="1.200"/><path d="M8 13l-7 8" stroke="#ddd" stroke-width="1.300"/></svg>
    <span>Search</span>
  </div>
  <span class="taskview"><svg width="20" height="19" viewBox="0 0 18 19" preserveAspectRatio="none"><path d="M.5 5.500h11v8H.5zM0 2.500h12M0 16.500h12M.5 0v2.500M11.500 0v2.500M.5 16.500V19M11.500 16.500V19" fill="none" stroke="#fff"/><path d="M15 7h2.500v2.500H15zM16.500 0v5M16.500 11v8" stroke="#fff" fill="#fff"/></svg></span>
  <div class="apps">
    <span class="app run"><svg width="28" height="23" viewBox="0 0 30 30" preserveAspectRatio="none"><path d="M1 2h10l2 4h16v22H1z" fill="#e3a51a"/><path d="M1 8h28v20H1z" fill="#ffd55f"/><path d="M9 16h12v12h-3v-5h-6v5H9z" fill="#3a9ad9"/></svg></span>
    <span class="app run"><svg width="30" height="28" viewBox="0 0 34 34" preserveAspectRatio="none"><path d="M8 2h24v30H8z" fill="#185abd"/><path d="M8 2h24v8H8z" fill="#41a5ee"/><path d="M8 10h24v8H8z" fill="#2b7cd3"/><path d="M2 8h17v18H2z" fill="#103f91"/><text x="3.500" y="22" class="appglyph w">W</text></svg></span>
    <span class="app"><svg width="28" height="28" viewBox="0 0 30 34" preserveAspectRatio="none"><ellipse cx="15" cy="17" rx="14.500" ry="16.500" fill="#0d3b66"/><path d="M0 19l10 4c1-2 3-3 5-3l5-7c0-4 3-6 6-6s4 3 4 6c0 5-3 7-7 6l-7 5c0 3-3 5-6 4-2-1-3-2-3-3L1 24z" fill="#fff"/><circle cx="23" cy="13" r="3" fill="#0d3b66"/></svg></span>
    <span class="app"><svg width="29" height="30" viewBox="0 0 30 34" preserveAspectRatio="none"><rect width="30" height="34" rx="5" fill="#111"/><path d="M10 7h10c5 0 7 4 7 9s-2 8-7 8H3" fill="none" stroke="#e8e8e8" stroke-width="4"/><path d="M12 7v17" stroke="#e8e8e8" stroke-width="4"/><path d="M3 24v7h24" fill="none" stroke="#8a8a8a" stroke-width="2"/></svg></span>
    <span class="app"><span class="tile inv"><b>I</b><i>PRO</i></span></span>
    <span class="app"><svg width="29" height="30" viewBox="0 0 30 37" preserveAspectRatio="none"><path d="M21 1l9 4v27l-9 5L0 28l21 3z" fill="#8661c5"/><path d="M21 1L9 17 3 12 0 14v10l3 2 6-5 12 10zM3 16l3 3-3 3zM21 11v15l-8-7z" fill="#8661c5"/><path d="M14 19l7-7v14z" fill="#1f1f1f"/><path d="M3 16l3 3-3 3z" fill="#1f1f1f"/></svg></span>
    <span class="app"><span class="tile cad"><b>A</b></span></span>
    <span class="app"><svg width="29" height="29" viewBox="0 0 30 36" preserveAspectRatio="none"><path d="M12 0h11L10 24H0z" fill="#7ab648" transform="translate(0 2)"/><path d="M10 0h10l10 36H20z" fill="#0b7ec2"/><path d="M0 26h14l-2 3H13L7 36H3z" fill="#1fa99a"/></svg></span>
    <span class="app"><svg width="27" height="27" viewBox="0 0 28 34" preserveAspectRatio="none"><ellipse cx="14" cy="17" rx="14" ry="16.500" fill="#1ed760"/><path d="M5 11c6-2 13-2 18 1M6 17c5-2 11-1 16 1M7 22c4-1 9-1 13 1" fill="none" stroke="#111" stroke-width="2.400" stroke-linecap="round"/></svg></span>
    <span class="app run"><svg width="27" height="28" viewBox="0 0 28 34" preserveAspectRatio="none"><ellipse cx="14" cy="17" rx="14" ry="17" fill="#db4437"/><path d="M14 17L27 11a14 17 0 0 1-13 23z" fill="#f4c20d"/><path d="M14 17L1 9A14 17 0 0 0 11 33.700z" fill="#0f9d58"/><ellipse cx="14" cy="17" rx="7" ry="8.500" fill="#fff"/><ellipse cx="14" cy="17" rx="5.500" ry="6.800" fill="#4285f4"/></svg></span>
    <span class="app"><svg width="24" height="26" viewBox="0 0 25 33" preserveAspectRatio="none"><path d="M3 0h19c2 0 3 1 3 3v30l-6-6H3c-2 0-3-1-3-3V3c0-2 1-3 3-3z" fill="#7289da"/><path d="M6 9c4-2 9-2 13 0 2 3 2 6 2 9-2 2-4 2-5 2l-1-2H10l-1 2c-1 0-3 0-5-2 0-3 0-6 2-9z" fill="#fff"/><circle cx="9.500" cy="14" r="2" fill="#7289da"/><circle cx="15.500" cy="14" r="2" fill="#7289da"/></svg></span>
    <span class="app sticky"><svg width="24" height="23" viewBox="0 0 22 30" preserveAspectRatio="none"><path d="M0 0h22v19L12 30H0z" fill="#ffe600"/><path d="M22 15v15H9z" fill="#6a4a10" opacity=".9"/></svg></span>
    <span class="app narrow"><svg width="29" height="27" viewBox="0 0 30 33" preserveAspectRatio="none"><circle cx="17" cy="6" r="5.500" fill="#7b83eb"/><circle cx="26" cy="9" r="4" fill="#5059c9"/><path d="M19 13h11v10c0 4-3 6-6 6s-5-2-5-5z" fill="#5059c9"/><path d="M9 13h14v13c0 4-3 7-7 7s-7-3-7-7z" fill="#7b83eb"/><rect y="10" width="15" height="15" rx="2" fill="#4b53bc"/><text x="3.500" y="22" class="appglyph t">T</text></svg></span>
    <span class="app narrow"><svg width="30" height="21" viewBox="0 0 30 26" preserveAspectRatio="none"><path d="M2 9l7-3 7-2 7-4-1 9 5 12-10-3-9 0z" fill="#5a5248"/><circle cx="7" cy="9" r="3" fill="#ddd"/><circle cx="12" cy="9" r="3" fill="#ddd"/><circle cx="7" cy="9" r="1.500" fill="#222"/><circle cx="12" cy="9" r="1.500" fill="#222"/><path d="M12 17l14 6" stroke="#d08030" stroke-width="2.500"/></svg></span>
    <span class="app run narrow"><span class="brackets"><i></i><i></i></span></span>
    <span class="app run narrow"><svg width="27" height="28" viewBox="0 0 28 32" preserveAspectRatio="none"><path d="M14 0l14 14-7 4H7L0 14z" fill="#3a3a3a"/><path d="M14 1l8 9-4 1-4 4-4-4-4-1z" fill="#e8e8e8"/><path d="M7 16h14l-3 4 2 4-4 1 2 5-5-1-4 3 1-6-4-1 3-3z" fill="#0c0c0c"/></svg></span>
    <span class="app run active narrow"><svg width="30" height="28" viewBox="0 0 34 36" preserveAspectRatio="none"><path d="M4 8l6 3 4-2 4-7 3 2 4-3 2 13 3 6H8z" fill="#9a9a9a"/><circle cx="17" cy="11" r="2" fill="#333"/><circle cx="23" cy="11" r="2" fill="#333"/><path d="M0 15l8 1 7 7 19-1 0 14H0z" fill="#fff"/></svg></span>
  </div>
  <div class="tray">
    <svg width="16" height="9" viewBox="0 0 16 10" preserveAspectRatio="none"><path d="M1 9l7-8 7 8" fill="none" stroke="#fff" stroke-width="1.200"/></svg>
    <svg class="t-wifi" width="16" height="16" viewBox="0 0 16 17" preserveAspectRatio="none"><path d="M1 13C1 7 7 2 15 1M4 15c0-4 5-9 11-10M7 15c0-3 3-6 8-6" fill="none" stroke="#ccc" stroke-width="1"/><circle cx="13" cy="15" r="1.500" fill="#fff"/></svg>
    <svg class="t-vol" width="20" height="17" viewBox="0 0 20 17"><path d="M1 6h3l5-5v15l-5-5H1z" fill="none" stroke="#fff"/><path d="M12 5c1 2 1 5 0 7M15 3c2 3 2 8 0 11M18 1c2 4 2 11 0 15" fill="none" stroke="#999"/></svg>
    <svg class="t-bat" width="20" height="13" viewBox="0 0 20 14" preserveAspectRatio="none"><path d="M4.500 3.500h15v8h-15z" fill="none" stroke="#fff"/><path d="M5 4h7v7H5zM0 2v3h3V2M1.500 0v2M1.500 5v4" fill="#fff" stroke="#fff"/></svg>
    <span class="lang">ENG</span>
    <div class="clock"><span>1:12 AM</span><span>15/6/2020</span></div>
    <span class="notif"><svg width="20" height="17" viewBox="0 0 20 17"><path d="M0 0h20v17H0z" fill="#fff"/><path d="M4 5h12M4 9h12M4 13h8" stroke="#222"/></svg><b class="notif-count">11</b></span>
  </div>
</footer>
</body>
</html>
```
FILE: styles.css
```css
* { box-sizing: border-box; }
html, body { margin: 0; padding: 0; }
body {
  width: 1920px;
  height: 1080px;
  overflow: hidden;
  display: flex;
  flex-direction: column;
  font-family: "Open Sans", "Noto Sans", sans-serif;
  font-size: 14px;
  color: #dfe3e8;
  background: #444;
}
svg { display: block; flex: none; }
.defs { position: absolute; }
ul { list-style: none; margin: 0; padding: 0; }

/* Title bar */
.titlebar {
  flex: none;
  height: 29px;
  background: #fff;
  color: #000;
  display: flex;
  align-items: center;
  padding: 0 3px 0 7px;
  font-size: 14px;
}
.title-icon { width: 17px; height: 15px; color: #a9a9a9; margin-right: 3px; margin-top: -6px; }
.title-text { letter-spacing: .17px; white-space: nowrap; }
.winbtns { margin-left: auto; display: flex; }
.winbtn { width: 58.500px; display: flex; justify-content: center; align-items: center; }

/* Menu */
.menubar {
  flex: none;
  height: 30px;
  background: #484848;
  display: flex;
  align-items: center;
  gap: 12.600px;
  padding: 0 0 0 7px;
  font-size: 14.500px;
  color: #dfe3e8;
  letter-spacing: -.2px;
}

.workspace { flex: none; height: 970px; display: flex; background: #434343; overflow: hidden; }

/* Left dock */
.leftdock { flex: none; width: 186px; display: flex; flex-direction: column; overflow: hidden; }
.wilber-band { height: 26px; margin-bottom: 2px; }
.toolgrid { display: grid; grid-template-columns: repeat(5, 37px); grid-auto-rows: 32px; margin-left: -1px; }
.tool { position: relative; display: flex; align-items: center; justify-content: center; color: #b9b9b9; }
.tool svg { width: 24px; height: 24px; }
.tool::after {
  content: "";
  position: absolute;
  right: 4px;
  bottom: 3px;
  border-left: 4px solid transparent;
  border-bottom: 4px solid #d0d0d0;
}
.tool.plain::after { display: none; }
.tool.active { background: #202020; border: 1px solid #161616; border-radius: 4px; }
.tool.active::after { display: none; }
.tool-a { font-family: "Open Sans", sans-serif; font-size: 29px; line-height: 1; color: #b9b9b9; }

.colors { height: 49px; padding: 4px 0 0 74px; }
.well { position: relative; width: 42px; height: 40px; }
.fgc, .bgc { position: absolute; width: 24px; height: 24px; }
.fgc { left: 0; top: 0; background: #000; border: 1px solid #000; box-shadow: inset 0 0 0 1px #fff; }
.bgc { left: 16px; top: 14px; background: #fff; border: 1px solid #000; }
.swap { position: absolute; left: 28px; top: 0; width: 13px; height: 12px; }
.mini-b, .mini-w { position: absolute; width: 7px; height: 7px; border: 1px solid #fff; }
.mini-b { left: 0; top: 26px; background: #000; }
.mini-w { left: 5px; top: 31px; background: #fff; border-color: #000; }

.tabrow { height: 21px; flex: none; display: flex; align-items: flex-end; position: relative; gap: 1px; }
.tab { height: 19px; width: 19px; background: #2e2e2e; display: flex; align-items: center; justify-content: center; }
.tab.first { height: 21px; width: 21px; background: #444; border: 1px solid #5c5c5c; border-bottom: 0; }
.tab-thumb { width: 14px; height: 14px; background: #fff; }
.dockmenu { position: absolute; right: 1px; top: 5px; width: 12px; height: 12px; }

.options { flex: 1; border-top: 1px solid #5a5a5a; border-right: 1px solid #555; padding: 0 1px 0 3px; background: #444; }
.opt-title { margin: 0; height: 20px; line-height: 22px; font-size: 14px; font-weight: 700; letter-spacing: -.2px; padding-left: 1px; }
.comborow { display: flex; gap: 5px; height: 31px; margin-bottom: 4px; }
.combo {
  display: flex;
  align-items: center;
  height: 31px;
  background: #2e2e2e;
  border: 1px solid #1f1f1f;
  border-radius: 5px;
  padding: 0 5px 0 6px;
  letter-spacing: -.3px;
}
.combo.grow { flex: 1; }
.combo.small { width: 44px; padding: 0 5px; justify-content: space-between; flex: none; }
.push { margin-left: auto; margin-right: 6px; }
.muted { color: #7f7f7f; }
.c12 { width: 12px; height: 8px; color: #ddd; }
.c10 { width: 10px; height: 7px; color: #e8e8e8; margin-left: auto; }
.r14 { width: 13px; height: 13px; color: #b4b4b4; }

.slider {
  display: flex;
  flex: none;
  align-items: center;
  height: 20px;
  width: 135px;
  border: 1px solid #7d7d7d;
  padding: 0 2px 0 2px;
  font-size: 14px;
  letter-spacing: -.45px;
  white-space: nowrap;
  overflow: hidden;
  background: linear-gradient(to right, #585858 var(--v), #000 var(--v), #000 calc(var(--v) + 1px), #2f2f2f calc(var(--v) + 1px));
}
.slider.full { width: 181px; background: linear-gradient(to right, #5a5a5a var(--v), #000 var(--v), #000 calc(var(--v) + 1px), #333 calc(var(--v) + 1px)); }
.val { margin-left: auto; margin-right: 3px; }
.spinner { width: 9px; height: 18px; color: #c4c4c4; }

.picker { display: flex; height: 41px; margin-top: 5px; align-items: flex-end; }
.pick-btn { width: 35px; height: 41px; background: #2e2e2e; border: 1px solid #222; border-radius: 5px; display: flex; align-items: center; justify-content: center; }
.pick-prev { width: 25px; height: 25px; background: #fff; border: 1px solid #000; position: relative; display: flex; align-items: center; justify-content: center; }
.pick-prev i { width: 3px; height: 3px; background: #333; }
.pick-prev.dark { background: #333; }
.pick-body { margin-left: 3px; width: 112px; display: flex; flex-direction: column; }
.pick-label { height: 18px; line-height: 20px; letter-spacing: -.35px; font-size: 14px; }
.pick-entry { height: 24px; background: #1f1f1f; border: 1px solid #3a3a3a; padding-left: 3px; line-height: 24px; letter-spacing: -.35px; font-size: 14px; }
.edit { width: 22px; height: 20px; color: #bdbdbd; margin: 0 0 2px 7px; }

.params { margin-top: 5px; display: flex; flex-direction: column; gap: 4px; }
.param { display: flex; align-items: center; height: 23px; }
.param .r14 { margin: 0 5px 0 6px; }
.lock { width: 22px; height: 23px; background: #232323; border-radius: 4px; display: flex; align-items: center; justify-content: center; color: #c8c8c8; flex: none; }
.lock svg { width: 12px; height: 16px; }

.picker.dyn { margin-top: 4px; }
.checks { margin-top: 3px; }
.check { height: 24px; display: flex; align-items: center; gap: 5px; padding-left: 2px; letter-spacing: -.3px; font-size: 14px; color: #d5d9de; white-space: pre; }
.check.tall { height: 25px; }
.check.short { height: 23px; }
.box { width: 13px; height: 13px; background: #2c2c2c; border: 1px solid #262626; border-radius: 3px; flex: none; }
.box.on { background: linear-gradient(#fff, #fff) center/7px 3px no-repeat, linear-gradient(#fff, #fff) center/3px 7px no-repeat, #222; }

.sash { flex: none; width: 4px; display: flex; align-items: center; justify-content: center; background: #404040; }
.sash i { width: 3px; height: 18px; background: repeating-linear-gradient(#aaa 0 2px, transparent 2px 5px); margin-top: 40px; }
.sash.right { width: 2px; }
.sash.right i { display: none; }

/* Centre */
.center { flex: none; width: 1525px; display: flex; flex-direction: column; background: #444; }
.imagetabs { height: 38px; margin-top: 1px; border-bottom: 1px solid #585858; }
.imgtab { width: 82px; height: 38px; padding: 4px 0 0 4px; display: flex; gap: 7px; align-items: flex-start; border: 1px solid #585858; border-bottom: 1px solid #434343; background: #434343; }
.imgthumb { width: 48px; height: 27px; background: linear-gradient(#d8d8d8, #d8d8d8) 18px 11px / 10px 1px no-repeat, #fff; }
.imgtab svg { margin-top: 9px; }
.view {
  flex: 1;
  min-height: 0;
  display: grid;
  grid-template-columns: 21px 1484px 20px;
  grid-template-rows: 20px 1fr;
  background: #444;
}
.corner { display: flex; align-items: center; justify-content: center; }
.hruler {
  position: relative;
  display: flex;
  overflow: hidden;
  padding-left: 89px;
  border-bottom: 1px solid #d5d5d5;
  background-image: linear-gradient(to right, #c8c8c8 1px, transparent 1px);
  background-size: 23px 6px;
  background-position: 20px bottom;
  background-repeat: repeat-x;
  font-size: 11.500px;
  color: #d7dade;
  line-height: 17px;
}
.hruler::after {
  content: "";
  position: absolute;
  left: 1475px;
  bottom: 0;
  border: 4px solid transparent;
  border-bottom: 0;
  border-top: 7px solid #c8c8c8;
}
.hruler span { flex: none; width: 115px; height: 100%; border-left: 1px solid #d0d0d0; letter-spacing: -.2px; }
.zoombtn { display: flex; justify-content: center; align-items: center; margin: 3px 5px 2px 3px; background: #666; }
.vruler {
  position: relative;
  display: flex;
  flex-direction: column;
  padding-top: 12px;
  overflow: hidden;
  border-right: 1px solid #c8c8c8;
}
.vruler::after {
  content: "";
  position: absolute;
  right: 0;
  top: 579px;
  border: 4px solid transparent;
  border-right: 0;
  border-left: 7px solid #c8c8c8;
}
.vruler span {
  flex: none;
  height: 115px;
  width: 15px;
  margin-left: 5px;
  padding: 0 6px 0 1px;
  border-top: 1px solid #c8c8c8;
  font-size: 11px;
  line-height: 10px;
  word-break: break-all;
  color: #d7dade;
  background-image: linear-gradient(#c8c8c8 1px, transparent 1px);
  background-size: 6px 23px;
  background-position: right top;
  background-repeat: repeat-y;
}
.paint { width: 1484px; height: 911px; }
.vscroll { background: #1f1f1f; margin-right: 3px; padding: 0 2px; height: 911px; }
.vscroll i { display: block; height: 31px; width: 13px; margin-top: 414px; background: #5c5c5c; border-radius: 3px; }

/* Right dock */
.rightdock { flex: none; width: 203px; display: flex; flex-direction: column; overflow: hidden; background: #444; }
.rightdock .tabrow { margin-left: 1px; }
.tabrow.rt { height: 23px; }
.tabrow.rt .tab { height: 20px; }
.tabrow.rt .tab.first { height: 22px; }
.tab-swatch { width: 14px; height: 14px; background: #fff; border: 1px solid #000; display: flex; align-items: center; justify-content: center; }
.tab-swatch i { width: 2px; height: 2px; background: #000; }
.tab-aa { width: 15px; height: 15px; background: #fff; color: #111; font-size: 9px; line-height: 15px; text-align: center; letter-spacing: -.3px; }
.rightdock .dockmenu { right: 3px; }
.brushes-panel { border-top: 1px solid #5a5a5a; padding: 3px 4px 0 3px; height: 442px; }
.darkcombo { height: 21px; background: #1f1f1f; margin: 0 0 0 2px; display: flex; align-items: center; padding: 0 5px 0 3px; letter-spacing: -.3px; }
.filter { color: #6a6a6a; font-style: italic; font-size: 15px; letter-spacing: -.2px; }
.brushname { height: 22px; line-height: 22px; font-style: italic; font-size: 15px; color: #c7d8ea; letter-spacing: -.2px; padding-left: 1px; }
.brushview { display: flex; height: 319px; margin-left: 1px; }
.gutter { width: 10px; background: #3c3c3c; }
.bscroll { width: 15px; background: #1f1f1f; margin-left: 1px; padding: 1px; }
.bscroll i { display: block; height: 247px; background: #5c5c5c; border-radius: 2px; }
.basic { margin-top: 4px; }
.slider.sp, .slider.lay { width: 196px; height: 19px; }
.slider.sp { margin-top: 4px; }
.iconrow { height: 26px; display: flex; align-items: center; justify-content: space-between; padding: 0 9px; color: #bdbdbd; }
.dock-split { height: 3px; border-top: 1px solid #5a5a5a; display: flex; justify-content: center; }
.dock-split i { width: 15px; height: 2px; background: repeating-linear-gradient(to right, #aaa 0 3px, transparent 3px 6px); }
.tabrow.rt2 .tab { height: 19px; }
.tabrow.rt2 .tab.first { width: 21px; }
.layers-panel { flex: 1; min-height: 0; border-top: 1px solid #5a5a5a; padding: 2px 4px 0 3px; display: flex; flex-direction: column; }
.comborow.r { margin-bottom: 2px; gap: 2px; flex: none; }
.lockrow { height: 27px; flex: none; display: flex; align-items: center; gap: 9px; color: #dfe3e8; padding-top: 1px; letter-spacing: -.3px; }
.lockrow svg { color: #bdbdbd; }
.lock-check { width: 13px; height: 13px; background: conic-gradient(#bdbdbd 25%, #555 0 50%, #bdbdbd 0 75%, #555 0) 0 0 / 6px 6px; }
.layerrow { height: 26px; flex: none; background: #1f1f1f; display: flex; align-items: center; overflow: hidden; padding-left: 5px; }
.eye { margin-right: 51px; }
.layerthumb { width: 36px; height: 22px; background: #fff; flex: none; }
.layername { margin-left: 4px; font-size: 14px; letter-spacing: -.1px; color: #d6e2f0; white-space: nowrap; }
.layerlist { flex: 1; background: #303030; }

/* Taskbar */
.taskbar { flex: none; height: 51px; background: #202020; display: flex; align-items: stretch; color: #fff; }
.start { width: 60px; display: flex; align-items: center; justify-content: center; }
.search { width: 430px; background: #333; border: 1px solid #5a5a5a; display: flex; align-items: center; padding-left: 15px; gap: 14px; font-size: 18px; color: #cfd6dc; }
.taskview { width: 59px; margin-right: 3px; display: flex; align-items: center; justify-content: center; }
.apps { display: flex; width: 1049px; }
.app { flex: none; width: 62px; display: flex; align-items: center; justify-content: center; position: relative; padding-bottom: 2px; }
.app.narrow { width: 61px; }
.app.run::after { content: ""; position: absolute; left: 5px; right: 5px; bottom: 0; height: 3px; background: #f47cb8; }
.app.active { background: #5a5a5a; }
.app.active::after { left: 0; right: 0; }
.app.sticky { background: #a5602c; box-shadow: inset 0 -3px 0 #ff7a00; }
.appglyph { font-family: "Open Sans", sans-serif; font-weight: 700; fill: #fff; }
.appglyph.w { font-size: 15px; }
.appglyph.t { font-size: 12px; }
.tile { width: 30px; height: 30px; display: flex; flex-direction: column; align-items: center; justify-content: center; }
.tile.inv { background: #f9d9b8; color: #c77a2a; }
.tile.inv b { font-family: "Liberation Serif", serif; font-size: 25px; line-height: 25px; }
.tile.inv i { font-size: 5px; font-style: normal; font-weight: 700; line-height: 5px; color: #e89a4a; align-self: flex-end; margin-right: 2px; }
.tile.cad { background: #f6e6e0; color: #b3202a; }
.tile.cad b { font-size: 28px; font-style: italic; line-height: 1; }
.brackets { width: 29px; height: 30px; border-radius: 4px; background: #1d9ad6; display: flex; align-items: center; justify-content: center; gap: 2px; }
.brackets i { width: 9px; height: 18px; border: 3px solid #fff; background: #12689a; }
.tray { flex: 1; display: flex; align-items: center; padding-left: 11px; }
.t-wifi { margin-left: 15px; }
.t-vol { margin-left: 11px; }
.t-bat { margin-left: 11px; }
.lang { margin-left: 14px; font-size: 14px; color: #f0f0f0; letter-spacing: -.2px; }
.clock { width: 92px; margin-left: 5px; display: flex; flex-direction: column; align-items: center; font-size: 16px; line-height: 24px; color: #f0f0f0; letter-spacing: -.3px; white-space: nowrap; }
.notif { position: relative; margin-left: 12px; margin-top: -7px; }
.notif-count { position: absolute; left: 9px; top: 9px; width: 21px; height: 21px; border-radius: 50%; border: 1px solid #aaa; background: #202020; font-size: 14px; line-height: 19px; font-weight: 400; text-align: center; color: #fff; letter-spacing: -1px; }
```
